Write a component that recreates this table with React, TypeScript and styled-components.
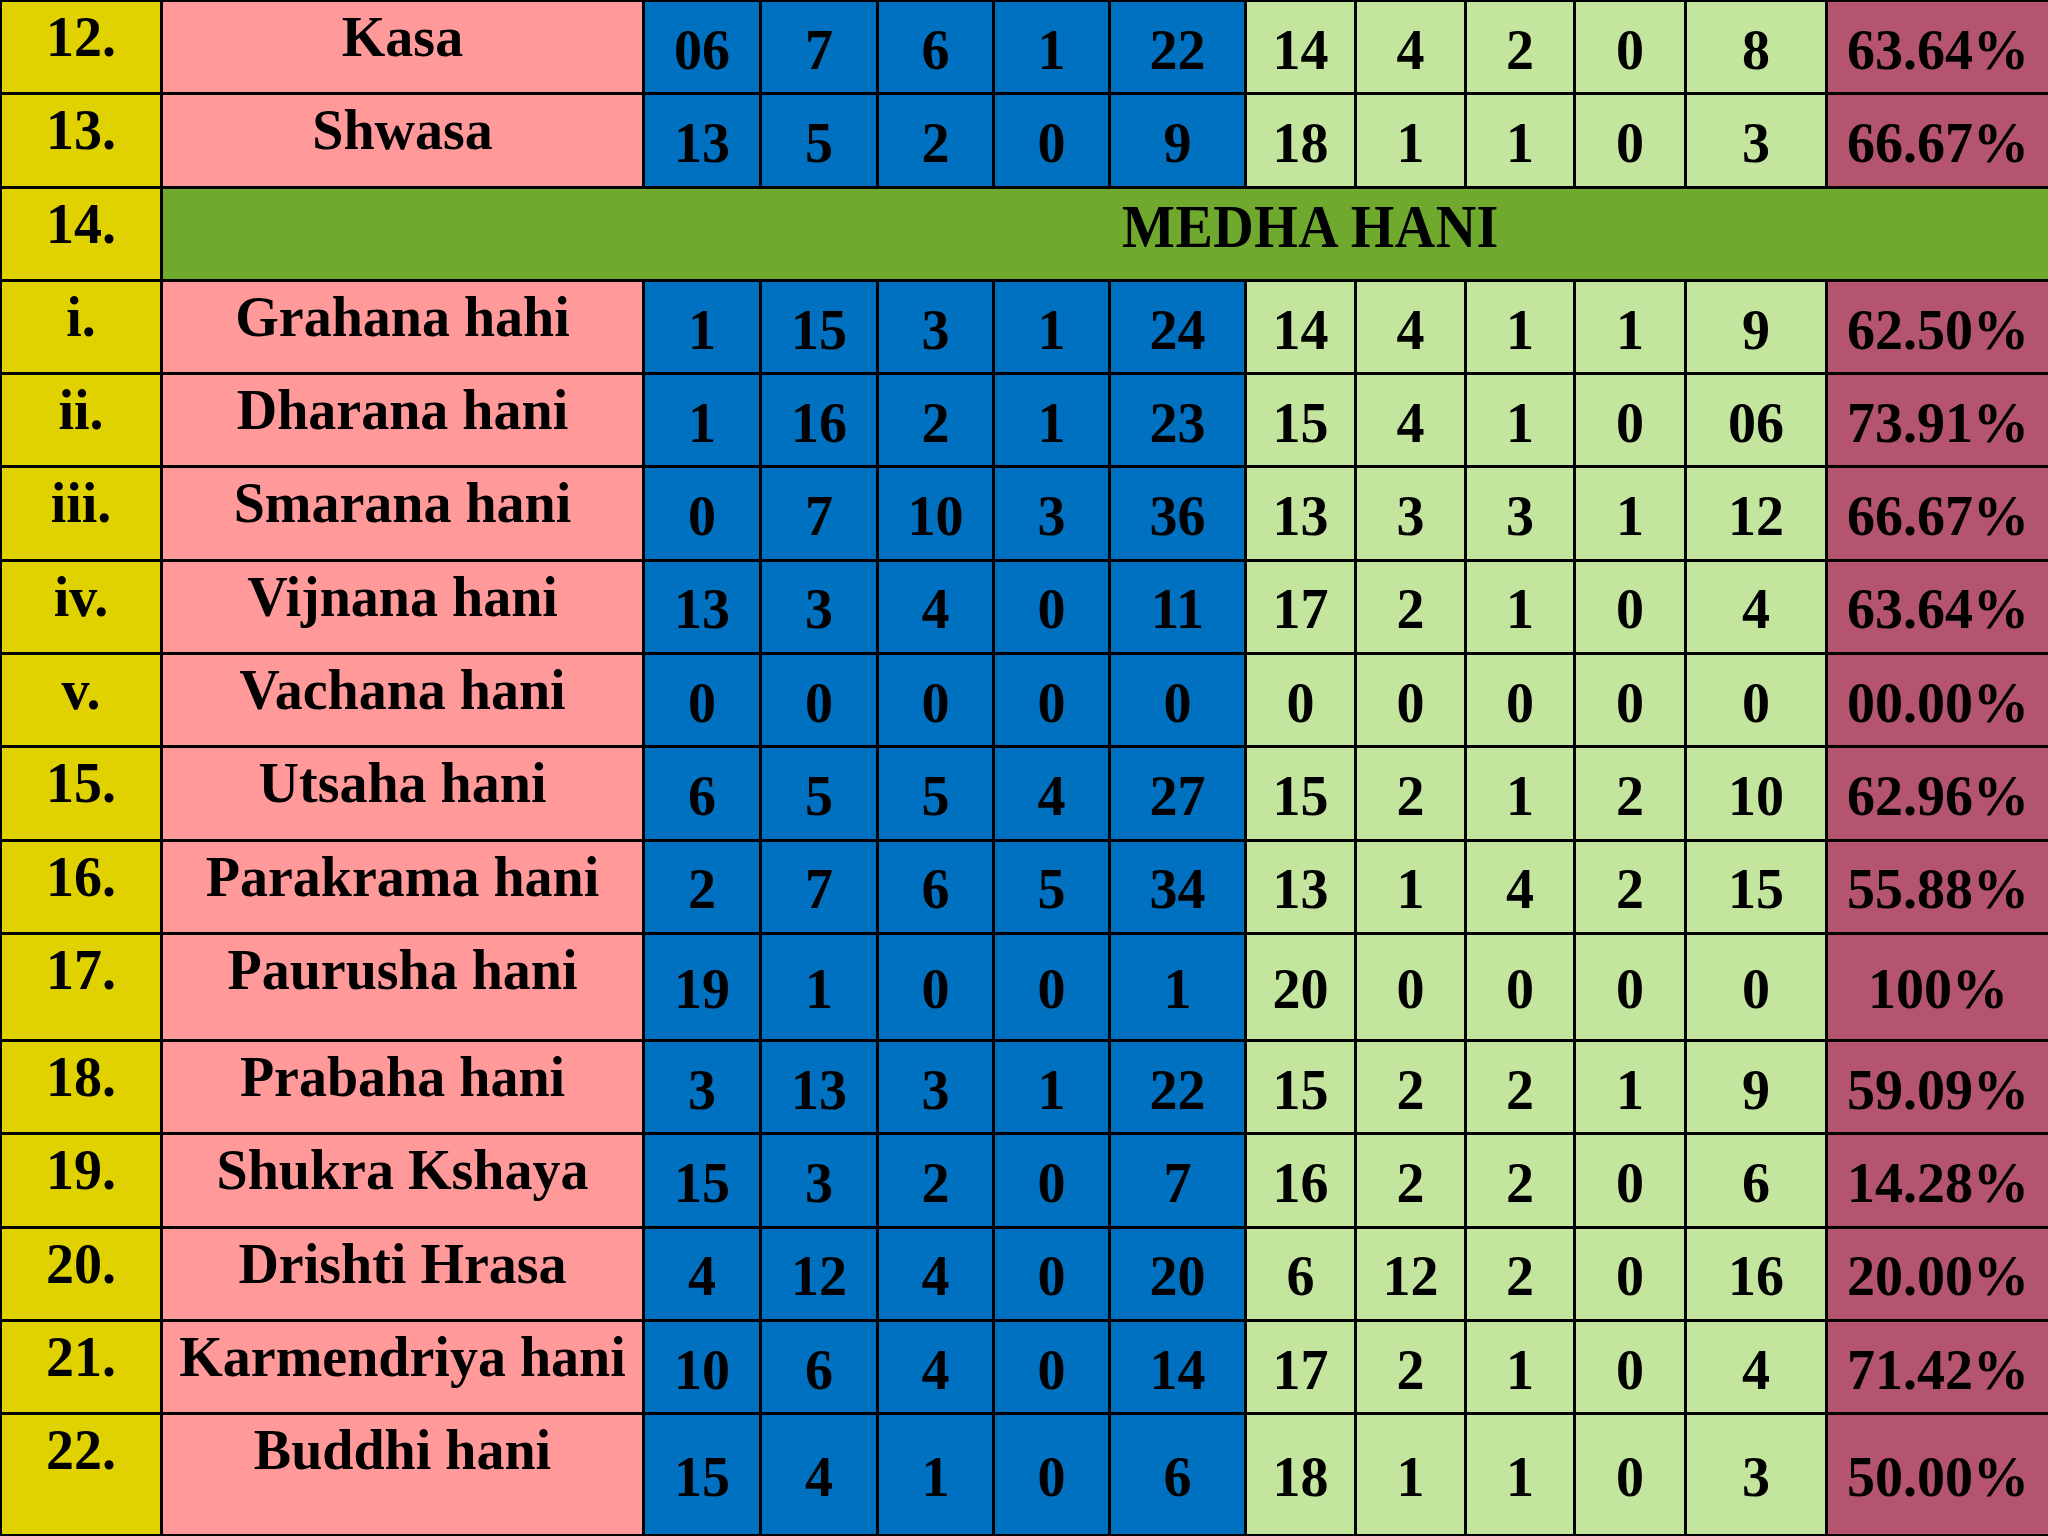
import React from 'react';
import styled, { createGlobalStyle } from 'styled-components';

const GlobalStyle = createGlobalStyle`
  html, body {
    margin: 0;
    padding: 0;
    background: #000;
    overflow: hidden;
  }
`;

const colors = {
  serial: '#E0D100',
  name: '#FF999A',
  before: '#0070C0',
  after: '#C3E59E',
  section: '#6FAA2E',
  result: '#B5546F',
};

// column widths measured from the reference (3px rules between them)
const COLUMNS = '158px 479px 114px 114px 113px 113px 133px 107px 107px 106px 108px 138px 220px';

const Table = styled.div<{ $rows: string }>`
  display: grid;
  grid-template-columns: ${COLUMNS};
  grid-template-rows: ${({ $rows }) => $rows};
  gap: 3px;
  padding: 2px 0 3px 2px;
  width: 2048px;
  height: 1536px;
  box-sizing: border-box;
  background: #000;
  font-family: 'Liberation Serif', 'Times New Roman', serif;
  font-weight: 700;
  font-size: 56px;
  line-height: 1;
  color: #000;
`;

const Row = styled.div`
  display: contents;
`;

const Cell = styled.div<{ $bg: string; $top?: boolean }>`
  display: flex;
  justify-content: center;
  align-items: ${({ $top }) => ($top ? 'flex-start' : 'center')};
  padding-top: ${({ $top }) => ($top ? '7px' : '5px')};
  background: ${({ $bg }) => $bg};
  white-space: nowrap;
  overflow: hidden;
`;

const SectionCell = styled.div`
  grid-column: 2 / -1;
  display: flex;
  justify-content: center;
  align-items: flex-start;
  padding: 6px 0 0 410px;
  background: ${colors.section};
  letter-spacing: 0.5px;
`;

const SectionTitle = styled.span`
  display: inline-block;
  transform: scaleY(1.1);
  transform-origin: top;
`;

type DataRow = {
  no: string;
  name: string;
  before: string[];
  after: string[];
  pct: string;
  height?: number;
};

type SectionRow = { no: string; section: string; height?: number };

const rows: (DataRow | SectionRow)[] = [
  { no: '12.', name: 'Kasa', before: ['06', '7', '6', '1', '22'], after: ['14', '4', '2', '0', '8'], pct: '63.64%' },
  { no: '13.', name: 'Shwasa', before: ['13', '5', '2', '0', '9'], after: ['18', '1', '1', '0', '3'], pct: '66.67%' },
  { no: '14.', section: 'MEDHA HANI' },
  { no: 'i.', name: 'Grahana hahi', before: ['1', '15', '3', '1', '24'], after: ['14', '4', '1', '1', '9'], pct: '62.50%' },
  { no: 'ii.', name: 'Dharana hani', before: ['1', '16', '2', '1', '23'], after: ['15', '4', '1', '0', '06'], pct: '73.91%' },
  { no: 'iii.', name: 'Smarana hani', before: ['0', '7', '10', '3', '36'], after: ['13', '3', '3', '1', '12'], pct: '66.67%' },
  { no: 'iv.', name: 'Vijnana hani', before: ['13', '3', '4', '0', '11'], after: ['17', '2', '1', '0', '4'], pct: '63.64%' },
  { no: 'v.', name: 'Vachana hani', before: ['0', '0', '0', '0', '0'], after: ['0', '0', '0', '0', '0'], pct: '00.00%' },
  { no: '15.', name: 'Utsaha hani', before: ['6', '5', '5', '4', '27'], after: ['15', '2', '1', '2', '10'], pct: '62.96%' },
  { no: '16.', name: 'Parakrama hani', before: ['2', '7', '6', '5', '34'], after: ['13', '1', '4', '2', '15'], pct: '55.88%' },
  { no: '17.', name: 'Paurusha hani', before: ['19', '1', '0', '0', '1'], after: ['20', '0', '0', '0', '0'], pct: '100%', height: 104 },
  { no: '18.', name: 'Prabaha hani', before: ['3', '13', '3', '1', '22'], after: ['15', '2', '2', '1', '9'], pct: '59.09%' },
  { no: '19.', name: 'Shukra Kshaya', before: ['15', '3', '2', '0', '7'], after: ['16', '2', '2', '0', '6'], pct: '14.28%' },
  { no: '20.', name: 'Drishti Hrasa', before: ['4', '12', '4', '0', '20'], after: ['6', '12', '2', '0', '16'], pct: '20.00%' },
  { no: '21.', name: 'Karmendriya hani', before: ['10', '6', '4', '0', '14'], after: ['17', '2', '1', '0', '4'], pct: '71.42%' },
  { no: '22.', name: 'Buddhi hani', before: ['15', '4', '1', '0', '6'], after: ['18', '1', '1', '0', '3'], pct: '50.00%', height: 119 },
];

const isSection = (r: DataRow | SectionRow): r is SectionRow => 'section' in r;

export default function App() {
  const template = rows.map((r) => `${r.height ?? 90.3}px`).join(' ');

  return (
    <>
      <GlobalStyle />
      <Table $rows={template}>
        {rows.map((r) => (
          <Row key={r.no}>
            <Cell $bg={colors.serial} $top>{r.no}</Cell>
            {isSection(r) ? (
              <SectionCell>
                <SectionTitle>{r.section}</SectionTitle>
              </SectionCell>
            ) : (
              <>
                <Cell $bg={colors.name} $top>{r.name}</Cell>
                {r.before.map((v, i) => (
                  <Cell key={`b${i}`} $bg={colors.before}>{v}</Cell>
                ))}
                {r.after.map((v, i) => (
                  <Cell key={`a${i}`} $bg={colors.after}>{v}</Cell>
                ))}
                <Cell $bg={colors.result}>{r.pct}</Cell>
              </>
            )}
          </Row>
        ))}
      </Table>
    </>
  );
}
